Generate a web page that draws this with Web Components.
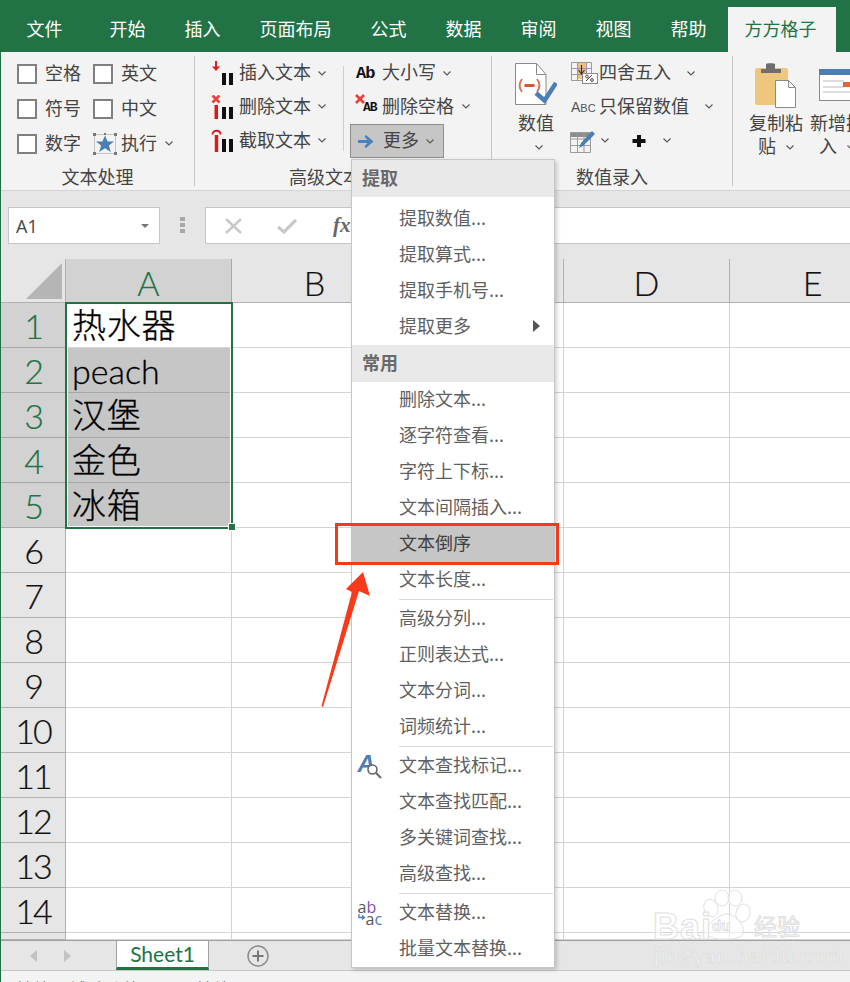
<!DOCTYPE html>
<html lang="zh">
<head>
<meta charset="utf-8">
<title>Excel</title>
<style>
  html, body { margin: 0; padding: 0; }
  body {
    position: relative;
    width: 849px;
    height: 982px;
    overflow: hidden;
    display: flex;
    flex-direction: column;
    border-left: 1px solid #217346;
    background: #fff;
    color: #444;
    font: 18px "Noto Sans CJK SC", "Liberation Sans", sans-serif;
  }
  .row { display: flex; align-items: center; }
  .col { display: flex; flex-direction: column; }
  .abc { font: 14px "Liberation Sans", sans-serif; color: #555; white-space: nowrap; }
  .abc small { font-size: 11px; }
  .ab { font: bold 17px "Liberation Mono", monospace; color: #111; white-space: nowrap; letter-spacing: -1px; }
  .ab2 { display: block; width: 24px; height: 20px; position: relative; }
  .ab2 svg { position: absolute; left: -2px; top: -4px; }
  .ab2 b { position: absolute; left: 7px; top: 3px; font: bold 13px/15px "Liberation Mono", monospace; color: #111; letter-spacing: -1px; }
  .afind { position: relative; display: block; width: 26px; height: 24px; left: 1px; }
  .afind b { position: absolute; left: 1px; top: -4px; font: italic bold 24px/28px "Liberation Sans", sans-serif; color: #4a7eb5; }
  .afind svg { position: absolute; left: 9px; top: 9px; }
  .abac { position: relative; display: block; width: 26px; height: 24px; left: 2px; font: 16px/12px "Open Sans", sans-serif; color: #555; }
  .abac i { font-style: normal; color: #7d4fa3; }
  .abac u { text-decoration: none; color: #4a7eb5; }
  .abac span { display: block; }
  .abac .l2 { padding-left: 8px; }
  .abac svg { position: absolute; left: 0; top: 13px; }
</style>
</head>
<body>

<xl-tabs>
  <xl-tab style="margin-left:6px;margin-right:8px">文件</xl-tab>
  <xl-tab>开始</xl-tab>
  <xl-tab>插入</xl-tab>
  <xl-tab>页面布局</xl-tab>
  <xl-tab>公式</xl-tab>
  <xl-tab>数据</xl-tab>
  <xl-tab>审阅</xl-tab>
  <xl-tab>视图</xl-tab>
  <xl-tab>帮助</xl-tab>
  <xl-tab active>方方格子</xl-tab>
</xl-tabs>

<xl-ribbon>
  <xl-group label="文本处理" style="width:194px">
    <div class="row" style="padding-left:16px;align-items:flex-start">
      <div class="col" style="width:76px">
        <xl-check>空格</xl-check>
        <xl-check>符号</xl-check>
        <xl-check>数字</xl-check>
      </div>
      <div class="col">
        <xl-check>英文</xl-check>
        <xl-check>中文</xl-check>
        <xl-cmd style="--icon-w:24px;--gap:4px;--chev:8px">
          <svg slot="icon" width="24" height="22" viewBox="0 0 24 22">
            <rect x="1.5" y="1.5" width="21" height="19" fill="none" stroke="#c4c4c4"/>
            <path d="M0 0h3v3H0zM21 0h3v3h-3zM0 19h3v3H0zM21 19h3v3h-3zM11 0h2v2h-2z" fill="#777"/>
            <path d="M12 2.5l2.6 6h6.4l-5.1 4 1.9 6.5-5.8-3.8-5.8 3.8 1.9-6.5-5.1-4h6.4z" fill="#4a7eb5"/>
          </svg>
          执行
        </xl-cmd>
      </div>
    </div>
  </xl-group>

  <xl-group label="高级文本处理" style="width:297px">
    <div class="row" style="padding-left:16px;align-items:flex-start">
      <div class="col" style="width:132px">
        <xl-cmd style="--h:34px">
          <svg slot="icon" width="23" height="24" viewBox="0 0 23 24">
            <path d="M5 0v8" stroke="#e81c1c" stroke-width="2"/><path d="M1 5.5l4 4.5 4-4.5z" fill="#e81c1c"/>
            <path d="M11 12h4v12h-4zM18 12h4v12h-4z" fill="#111"/>
          </svg>
          插入文本
        </xl-cmd>
        <xl-cmd style="--h:33px">
          <svg slot="icon" width="23" height="24" viewBox="0 0 23 24">
            <path d="M1.500 0.500l7 7m0-7l-7 7" stroke="#e8403a" stroke-width="2.600"/>
            <path d="M3.500 10h3.500v14H3.500z" fill="#e01818"/>
            <path d="M11 12h4v12h-4zM18 12h4v12h-4z" fill="#111"/>
          </svg>
          删除文本
        </xl-cmd>
        <xl-cmd style="--h:35px">
          <svg slot="icon" width="23" height="24" viewBox="0 0 23 24">
            <path d="M1.500 5.500c0-5 8-5 8 0" fill="none" stroke="#e01818" stroke-width="1.800"/>
            <path d="M3.800 6h3.400v17H3.800z" fill="#e01818"/>
            <path d="M11 10h4v13h-4zM18 10h4v13h-4z" fill="#111"/>
          </svg>
          截取文本
        </xl-cmd>
      </div>
      <div style="width:1px;height:85px;margin-top:10px;background:#cfcfcf"></div>
      <div class="col" style="margin-left:6px">
        <xl-cmd style="--h:34px;--pad:6px;--icon-w:21px"><span slot="icon" class="ab">Ab</span>大小写</xl-cmd>
        <xl-cmd style="--h:33px;--pad:6px;--icon-w:21px;--chev:8px">
          <span slot="icon" class="ab2">
            <svg width="12" height="12" viewBox="0 0 12 12"><path d="M2 2l8 8m0-8l-8 8" stroke="#e8403a" stroke-width="2.600"/></svg>
            <b>AB</b>
          </span>
          删除空格
        </xl-cmd>
        <xl-cmd active style="--h:34px;--pad:7px;--icon-w:20px;margin-top:1px;width:94px">
          <svg slot="icon" width="16" height="13" viewBox="0 0 16 13">
            <path d="M0 6.500h12" stroke="#4a82bd" stroke-width="3"/><path d="M8 0l7.500 6.500L8 13l-1.500-1.500 4-5-4-5z" fill="#4a82bd"/>
          </svg>
          更多
        </xl-cmd>
      </div>
    </div>
  </xl-group>

  <xl-group label="数值录入" style="width:241px">
    <div class="row" style="padding-left:23px;align-items:flex-start">
      <xl-bigcmd style="--w:42px;--text-w:36px">
        <svg slot="icon" width="42" height="42" viewBox="0 0 42 42">
          <path d="M.5.500h21l9.500 11v30H.5z" fill="#fff" stroke="#8a8a8a"/><path d="M21.500.500v11H31" fill="none" stroke="#8a8a8a"/>
          <path d="M7 16c-3 4-3 9 0 13M22 16c3 4 3 9 0 13" fill="none" stroke="#e0704f" stroke-width="1.800"/>
          <path d="M9.500 22.500h10" stroke="#d9553a" stroke-width="3"/>
          <path d="M21 30l8.500 7.500L41 20" fill="none" stroke="#4a7eb5" stroke-width="4.500"/>
        </svg>
        数值
      </xl-bigcmd>
      <div class="col" style="margin-left:14px">
        <xl-cmd style="--h:34px;--chev:16px">
          <svg slot="icon" width="27" height="22" viewBox="0 0 27 22" style="overflow:visible">
            <path d="M6 0h10v17H6z" fill="#edc27c"/>
            <path d="M.5.500h20v18H.5zM.5 6.500h20M.5 12.500h20M6.500.500v18M15.500.500v18" fill="none" stroke="#9b9b9b"/>
            <path d="M10.500 3v8" stroke="#333" stroke-width="1.200"/><path d="M7.500 8l3 4 3-4" fill="none" stroke="#333" stroke-width="1.200"/>
            <rect x="11.500" y="11.500" width="15" height="10" fill="#fff" stroke="#888"/>
            <path d="M15 19l6-6" stroke="#444" stroke-width="1"/><circle cx="16" cy="14.500" r="1.400" fill="none" stroke="#444"/><circle cx="21" cy="18" r="1.400" fill="none" stroke="#444"/>
          </svg>
          四舍五入
        </xl-cmd>
        <xl-cmd style="--h:33px;--chev:16px">
          <span slot="icon" class="abc">A<small>BC</small></span>
          只保留数值
        </xl-cmd>
        <div class="row" style="height:35px">
          <svg width="25" height="24" viewBox="0 0 25 24" style="margin-left:-1px;margin-right:6px">
            <path d="M.5 3h20v5H.5z" fill="#8c8c8c"/>
            <path d="M.5 3.500h20v20H.5zM.5 10h20M.5 16.500h20M7.500 3.500v20M14 3.500v20" fill="none" stroke="#9b9b9b"/>
            <path d="M9 19l2-5L22 2l3 3L13 17z" fill="#4a7eb5"/>
          </svg>
          <xl-chev></xl-chev>
          <svg width="14" height="14" viewBox="0 0 14 14" style="margin-left:23px"><path d="M5 1h4v4h4.500v4H9v4H5V9H.5V5H5z" fill="#111"/></svg>
          <xl-chev style="margin-left:17px"></xl-chev>
        </div>
      </div>
    </div>
  </xl-group>

  <xl-group label="" style="width:140px;border:0">
    <div class="row" style="padding-left:16px;align-items:flex-start;gap:7px">
      <xl-bigcmd style="--w:54px;--text-w:54px">
        <svg slot="icon" width="42" height="45" viewBox="0 0 42 45">
          <rect y="5" width="33" height="37" rx="2" fill="#eec77c"/>
          <path d="M6 10V6h5V1c0-1 9-1 9 0v5h6v4z" fill="#6e6e6e"/>
          <path d="M20.500 17.500h13l7 7v20h-20z" fill="#fff" stroke="#8a8a8a"/><path d="M33.500 17.500v7h7" fill="none" stroke="#8a8a8a"/>
        </svg>
        复制粘贴
      </xl-bigcmd>
      <xl-bigcmd style="--w:54px;--text-w:54px">
        <svg slot="icon" width="46" height="32" viewBox="0 0 46 32" style="margin:6px 0 0 10px;overflow:visible">
          <rect x=".5" y=".5" width="46" height="31" fill="#fff" stroke="#8a8a8a"/>
          <rect width="46" height="6" fill="#4a7eb5"/>
          <path d="M4 12h21M4 18h21M4 23h36" stroke="#bbb" stroke-width="1.200"/>
          <rect x="24" y="13" width="8" height="5" fill="#de6742"/>
        </svg>
        新增插入
      </xl-bigcmd>
    </div>
  </xl-group>
</xl-ribbon>

<xl-formula-bar name="A1"></xl-formula-bar>

<xl-sheet>
  <span slot="A1">热水器</span>
  <span slot="A2" class="lat">peach</span>
  <span slot="A3">汉堡</span>
  <span slot="A4">金色</span>
  <span slot="A5">冰箱</span>
</xl-sheet>

<xl-sheet-tabs active="Sheet1"></xl-sheet-tabs>
<xl-status>就绪　辅助功能：一切就绪</xl-status>

<xl-menu>
  <xl-menu-header>提取</xl-menu-header>
  <xl-menu-item style="margin-top:4px">提取数值...</xl-menu-item>
  <xl-menu-item>提取算式...</xl-menu-item>
  <xl-menu-item>提取手机号...</xl-menu-item>
  <xl-menu-item more>提取更多</xl-menu-item>
  <xl-menu-header>常用</xl-menu-header>
  <xl-menu-item>删除文本...</xl-menu-item>
  <xl-menu-item>逐字符查看...</xl-menu-item>
  <xl-menu-item>字符上下标...</xl-menu-item>
  <xl-menu-item>文本间隔插入...</xl-menu-item>
  <xl-menu-item active>文本倒序</xl-menu-item>
  <xl-menu-item>文本长度...</xl-menu-item>
  <xl-menu-sep></xl-menu-sep>
  <xl-menu-item>高级分列...</xl-menu-item>
  <xl-menu-item>正则表达式...</xl-menu-item>
  <xl-menu-item>文本分词...</xl-menu-item>
  <xl-menu-item>词频统计...</xl-menu-item>
  <xl-menu-sep></xl-menu-sep>
  <xl-menu-item>
    <span slot="icon" class="afind"><b>A</b>
      <svg width="16" height="16" viewBox="0 0 16 16"><circle cx="6.500" cy="6.500" r="4.500" fill="#fff" stroke="#666" stroke-width="1.600"/><path d="M10 10l5 5" stroke="#666" stroke-width="2"/></svg>
    </span>
    文本查找标记...
  </xl-menu-item>
  <xl-menu-item>文本查找匹配...</xl-menu-item>
  <xl-menu-item>多关键词查找...</xl-menu-item>
  <xl-menu-item>高级查找...</xl-menu-item>
  <xl-menu-sep></xl-menu-sep>
  <xl-menu-item>
    <span slot="icon" class="abac">
      <span>a<i>b</i></span>
      <span class="l2">a<u>c</u></span>
      <svg width="8" height="8" viewBox="0 0 8 8"><path d="M1 0v3.500h5M4 1.500l2.500 2-2.500 2" fill="none" stroke="#4a7eb5" stroke-width="1.300"/></svg>
    </span>
    文本替换...
  </xl-menu-item>
  <xl-menu-item>批量文本替换...</xl-menu-item>
</xl-menu>

<xl-callout></xl-callout>
<xl-watermark></xl-watermark>

<script>
// shared base: every element declares static css + static html
class XlBase extends HTMLElement {
  constructor() {
    super();
    const shadow = this.attachShadow({ mode: "open" });
    shadow.innerHTML = `<style>${this.constructor.css}</style>${this.constructor.html}`;
  }
}

const chevron = `<svg width="8" height="5" viewBox="0 0 8 5"><path d="M.5.500L4 4 7.500.500" fill="none" stroke="#555" stroke-width="1.100"/></svg>`;

class XlTabs extends XlBase {
  static css = `:host { display: flex; align-items: flex-end; height: 52px; background: #217346; flex: none; }`;
  static html = `<slot></slot>`;
}
class XlTab extends XlBase {
  static css = `
    :host { display: block; height: 45px; line-height: 43px; padding: 0 19.5px; color: #fff; white-space: nowrap; }
    :host([active]) { background: #f3f3f3; color: #217346; padding: 0 19px 0 17px; margin-left: 1.500px; }`;
  static html = `<slot></slot>`;
}

class XlRibbon extends XlBase {
  static css = `
    :host { display: flex; align-items: flex-start; height: 139px; box-sizing: border-box; flex: none; overflow: hidden;
            background: #f3f3f3; border-bottom: 1px solid #d4d4d4; }`;
  static html = `<slot></slot>`;
}
class XlGroup extends XlBase {
  static css = `
    :host { display: flex; flex: none; flex-direction: column; box-sizing: border-box; height: 130px; margin-top: 4px;
            border-right: 1px solid #c6c6c6; }
    .body { flex: 1; min-height: 0; }
    .label { height: 18px; line-height: 17px; text-align: center; color: #444; white-space: nowrap; }`;
  static html = `<div class="body"><slot></slot></div><div class="label"></div>`;
  connectedCallback() {
    this.shadowRoot.querySelector(".label").textContent = this.getAttribute("label") || "";
  }
}
class XlCheck extends XlBase {
  static css = `
    :host { display: flex; align-items: center; height: 35px; white-space: nowrap; }
    .box { width: 20px; height: 20px; box-sizing: border-box; border: 2px solid #808080; background: #fff; margin-right: 8px; }
    .t { padding-bottom: 4px; }`;
  static html = `<span class="box"></span><span class="t"><slot></slot></span>`;
}
class XlChev extends XlBase {
  static css = `:host { display: inline-flex; width: 8px; height: 5px; }`;
  static html = chevron;
}
class XlCmd extends XlBase {
  static css = `
    :host { display: flex; align-items: center; box-sizing: border-box; height: var(--h, 35px); padding: 0 var(--pad, 0);
            white-space: nowrap; }
    :host([active]) { background: #c6c6c6; border: 1px solid #8e8e8e; }
    .icon { display: flex; align-items: center; width: var(--icon-w, 23px); margin-right: var(--gap, 5px); flex: none; }
    .t { padding-bottom: 4px; }
    .chev { display: inline-flex; margin-left: var(--chev, 7px); }`;
  static html = `<span class="icon"><slot name="icon"></slot></span><span class="t"><slot></slot></span><span class="chev">${chevron}</span>`;
}
class XlBigCmd extends XlBase {
  static css = `
    :host { display: block; width: var(--w); }
    .icon { display: flex; justify-content: center; align-items: flex-start; height: 48px; padding-top: 7px; box-sizing: content-box; }
    .text { width: var(--text-w); margin: 0 auto; line-height: 23px; text-align: center; }
    .chev { display: inline-block; height: 5px; line-height: 0; vertical-align: 3px; margin-left: 6px; }
    .chev svg { display: block; }`;
  static html = `<div class="icon"><slot name="icon"></slot></div><div class="text"><slot></slot><span class="chev">${chevron}</span></div>`;
}

class XlFormulaBar extends XlBase {
  static css = `
    :host { display: flex; align-items: flex-start; height: 68px; box-sizing: border-box; padding: 16px 0 0 7px; background: #e6e6e6; flex: none; }
    .name { display: flex; align-items: center; justify-content: space-between; box-sizing: border-box; width: 152px; height: 37px;
            padding: 0 10px 0 7px; background: #fff; border: 1px solid #c6c6c6; font: 18px "Open Sans", sans-serif; color: #444; }
    .dots { width: 45px; display: flex; justify-content: center; padding-top: 10px; }
    .fx { flex: 1; display: flex; align-items: center; height: 37px; box-sizing: border-box; padding-left: 19px;
          background: #fff; border: 1px solid #c6c6c6; border-right: 0; }
    .f { margin-left: 36px; font: italic bold 21px "Liberation Serif", serif; color: #666; }`;
  static html = `
    <div class="name"><span id="n"></span><svg width="8" height="4" viewBox="0 0 8 4"><path d="M0 0h8L4 4z" fill="#777"/></svg></div>
    <div class="dots"><svg width="5" height="16" viewBox="0 0 5 16"><path d="M0 0h5v4H0zM0 6h5v4H0zM0 12h5v4H0z" fill="#a8a8a8"/></svg></div>
    <div class="fx">
      <svg width="17" height="16" viewBox="0 0 17 16"><path d="M1 1l15 14m0-14L1 15" stroke="#c8c8c8" stroke-width="2.400"/></svg>
      <svg width="20" height="16" viewBox="0 0 20 16" style="margin-left:35px"><path d="M1 9l6 5L19 2" fill="none" stroke="#c8c8c8" stroke-width="3.200"/></svg>
      <span class="f">fx</span>
    </div>`;
  connectedCallback() {
    this.shadowRoot.querySelector("#n").textContent = this.getAttribute("name");
  }
}

class XlSheet extends XlBase {
  static css = `
    :host { display: block; position: relative; height: 681px; flex: none; overflow: hidden; background: #fff; color: #111; }
    .grid { display: grid; grid-template-columns: 65px repeat(5, 166px); grid-template-rows: 44px repeat(14, 45px) 7px; height: 681px; }
    .grid > div { box-sizing: border-box; border-right: 1px solid #d4d4d4; border-bottom: 1px solid #d4d4d4; min-width: 0; overflow: hidden; }
    .corner { background: #e6e6e6; display: flex; align-items: flex-end; justify-content: flex-end; padding: 0 3px 3px 0; }
    .grid > .ch, .grid > .rh, .grid > .corner { background: #e6e6e6; border-color: #b0b0b0; }
    .ch { font: 300 34px/47px "Lato", sans-serif; text-align: center; -webkit-text-stroke: .2px currentColor; }
    .rh { font: 300 34px/46px "Lato", sans-serif; text-align: center; letter-spacing: -2px; -webkit-text-stroke: .2px currentColor; }
    .grid > .sel { background: #d2d2d2; color: #217346; border-color: #a8a8a8; }
    .cell { font: 300 34px/42px "Noto Sans CJK SC", sans-serif; padding-left: 6px; letter-spacing: .7px; white-space: nowrap; color: #000; -webkit-text-stroke: .3px #000; }
    .grid > .cell.hl { background: #c6c6c6; border-color: #a8a8a8; }
    .selbox { position: absolute; left: 64px; top: 43px; width: 168px; height: 227px; box-sizing: border-box; border: 2px solid #217346; box-shadow: inset 0 0 0 1px #fff; }
    .handle { position: absolute; left: 227px; top: 264px; width: 6px; height: 6px; background: #217346; border: 1px solid #fff; }
    ::slotted(.lat) { font-family: "Lato", sans-serif; letter-spacing: 0; line-height: 46px; }`;
  static html = `<div class="grid"></div><div class="selbox"></div><div class="handle"></div>`;
  connectedCallback() {
    const cols = ["A", "B", "C", "D", "E"];
    let out = `<div class="corner"><svg width="36" height="36" viewBox="0 0 36 36"><path d="M36 0v36H0z" fill="#b5b5b5"/></svg></div>`;
    cols.forEach((c, i) => { out += `<div class="ch ${i === 0 ? "sel" : ""}">${c}</div>`; });
    for (let r = 1; r <= 14; r++) {
      out += `<div class="rh ${r <= 5 ? "sel" : ""}">${r}</div>`;
      cols.forEach((c, i) => {
        const hl = i === 0 && r > 1 && r <= 5 ? "hl" : "";
        out += `<div class="cell ${hl}"><slot name="${c}${r}"></slot></div>`;
      });
    }
    // the sliver of row 15 above the sheet tabs
    out += `<div class="rh"></div>` + cols.map(() => `<div class="cell"></div>`).join("");
    this.shadowRoot.querySelector(".grid").innerHTML = out;
  }
}

class XlSheetTabs extends XlBase {
  static css = `
    :host { display: flex; align-items: stretch; height: 30px; box-sizing: border-box; flex: none; background: #e6e6e6; border-top: 1px solid #a0a0a0; }
    .nav { display: flex; align-items: center; gap: 27px; padding-left: 29px; width: 115px; box-sizing: border-box; }
    .tab { width: 93px; box-sizing: border-box; margin-top: -1px; background: #fff; border: 1px solid #a0a0a0; border-bottom: 3px solid #217346; text-align: center;
           font: 21px/25px "Lato", sans-serif; color: #217346; }
    .add { display: flex; align-items: center; margin-left: 38px; }`;
  static html = `
    <div class="nav">
      <svg width="7" height="12" viewBox="0 0 7 12"><path d="M7 0v12L0 6z" fill="#c2c2c2"/></svg>
      <svg width="7" height="12" viewBox="0 0 7 12"><path d="M0 0v12l7-6z" fill="#c2c2c2"/></svg>
    </div>
    <div class="tab"></div>
    <div class="add"><svg width="22" height="22" viewBox="0 0 22 22"><circle cx="11" cy="11" r="10" fill="none" stroke="#8c8c8c" stroke-width="1.500"/><path d="M11 5.500v11M5.500 11h11" stroke="#777" stroke-width="2"/></svg></div>`;
  connectedCallback() {
    this.shadowRoot.querySelector(".tab").textContent = this.getAttribute("active");
  }
}

class XlStatus extends XlBase {
  static css = `
    :host { display: block; flex: 1; min-height: 0; overflow: hidden; box-sizing: border-box; background: #f3f3f3; border-top: 1px solid #c6c6c6;
            padding: 6px 0 0 14px; line-height: 24px; color: #555; white-space: nowrap; word-spacing: 30px; }`;
  static html = `<slot></slot>`;
}

class XlMenu extends XlBase {
  static css = `
    :host { position: absolute; left: 350px; top: 159px; width: 204px; box-sizing: border-box; display: flex; flex-direction: column;
            background: #fff; border: 1px solid #c6c6c6; box-shadow: 2px 2px 4px rgba(0,0,0,.18); color: #5f5f5f; }`;
  static html = `<slot></slot>`;
}
class XlMenuHeader extends XlBase {
  static css = `
    :host { display: block; height: 37px; line-height: 35px; padding-left: 10px; background: #e9e9e9; color: #6a6a6a; font-weight: 700; }`;
  static html = `<slot></slot>`;
}
class XlMenuItem extends XlBase {
  static css = `
    :host { display: flex; align-items: center; height: 36px; position: relative; white-space: nowrap; }
    :host([active]) { background: #c6c6c6; color: #404040; }
    .icon { display: flex; align-items: center; justify-content: center; width: 47px; flex: none; box-sizing: border-box; padding-right: 14px; }
    .t { padding-bottom: 4px; }
    .more { display: none; position: absolute; left: 181px; top: 11px; width: 0; height: 0; border-left: 7px solid #555; border-top: 6px solid transparent; border-bottom: 6px solid transparent; }
    :host([more]) .more { display: block; }`;
  static html = `<span class="icon"><slot name="icon"></slot></span><span class="t"><slot></slot></span><span class="more"></span>`;
}
class XlMenuSep extends XlBase {
  static css = `:host { display: block; height: 3px; box-sizing: border-box; margin-left: 47px; margin-right: 1px; padding-top: 1px; }
    div { height: 1px; background: #d9d9d9; }`;
  static html = `<div></div>`;
}

class XlCallout extends XlBase {
  static css = `:host { position: absolute; left: -1px; top: 0; width: 850px; height: 982px; pointer-events: none; }`;
  static html = `
    <svg width="850" height="982" viewBox="0 0 850 982">
      <rect x="336.500" y="524.500" width="221" height="39" fill="none" stroke="#f53a17" stroke-width="3"/>
      <path d="M363 572L370 596 359 591 323 707 321.500 706 352 592 346 589z" fill="#f8391a"/>
    </svg>`;
}

class XlWatermark extends XlBase {
  static css = `
    :host { position: absolute; left: 650px; top: 890px; width: 200px; height: 92px; pointer-events: none; }
    span { position: absolute; white-space: nowrap; color: rgba(255,255,255,.75); -webkit-text-stroke: 1px #e0e0e0; }
    .bai { left: 2px; top: 14px; font: bold 36px/46px "Liberation Sans", sans-serif; letter-spacing: 1px; }
    .du { left: 61px; top: 26px; font: bold 15px/20px "Liberation Sans", sans-serif; }
    .jy { left: 103px; top: 18px; font: 23px/34px "Noto Sans CJK SC", sans-serif; }
    .url { left: 3px; top: 51px; font: 21px/28px "Lato", sans-serif; letter-spacing: 1.500px; }
    svg { position: absolute; left: 0; top: 0; }`;
  static html = `
    <svg width="200" height="60" viewBox="0 0 200 60">
      <g fill="rgba(255,255,255,.55)" stroke="#e0e0e0">
        <ellipse cx="60" cy="18" rx="7" ry="9" transform="rotate(-20 60 18)"/>
        <ellipse cx="71" cy="8" rx="7" ry="8"/>
        <ellipse cx="84" cy="8" rx="7" ry="8"/>
        <ellipse cx="92" cy="23" rx="7" ry="9" transform="rotate(15 92 23)"/>
        <path d="M56 44c-3-10 14-20 20-20s19 10 16 20c-2 7-34 7-36 0z"/>
      </g>
    </svg>
    <span class="bai">Bai</span><span class="du">du</span><span class="jy">经验</span><span class="url">jingyan.baidu.com</span>`;
}

customElements.define("xl-tabs", XlTabs);
customElements.define("xl-tab", XlTab);
customElements.define("xl-ribbon", XlRibbon);
customElements.define("xl-group", XlGroup);
customElements.define("xl-check", XlCheck);
customElements.define("xl-chev", XlChev);
customElements.define("xl-cmd", XlCmd);
customElements.define("xl-bigcmd", XlBigCmd);
customElements.define("xl-formula-bar", XlFormulaBar);
customElements.define("xl-sheet", XlSheet);
customElements.define("xl-sheet-tabs", XlSheetTabs);
customElements.define("xl-status", XlStatus);
customElements.define("xl-menu", XlMenu);
customElements.define("xl-menu-header", XlMenuHeader);
customElements.define("xl-menu-item", XlMenuItem);
customElements.define("xl-menu-sep", XlMenuSep);
customElements.define("xl-callout", XlCallout);
customElements.define("xl-watermark", XlWatermark);
</script>
</body>
</html>
